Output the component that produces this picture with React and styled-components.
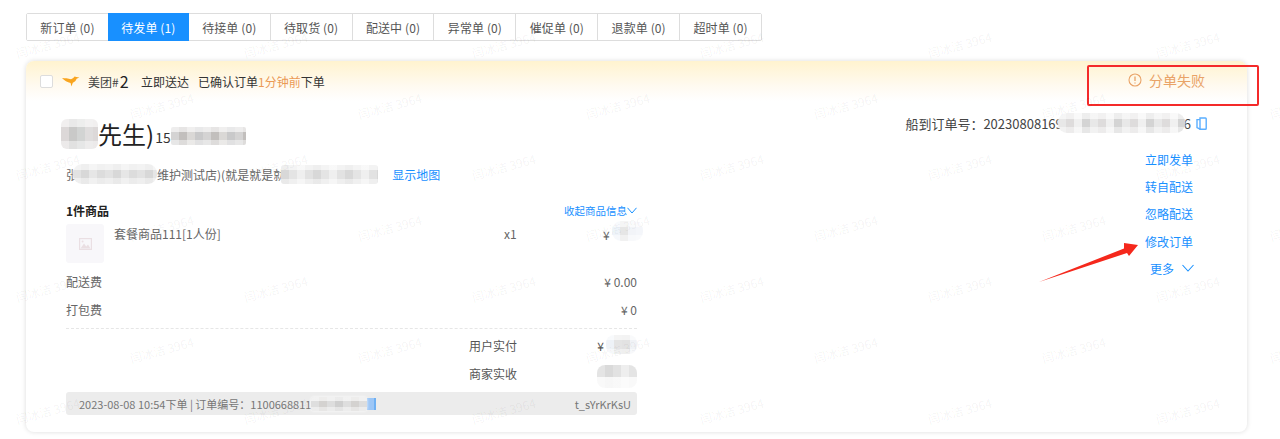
import React from "react";
import styled, { createGlobalStyle } from "styled-components";

const Global = createGlobalStyle`
  html, body { margin: 0; padding: 0; background: #fff; }
  body { font-family: "Noto Sans CJK SC", "Liberation Sans", sans-serif; font-size: 12px; color: #444; }
  #root { width: 1280px; height: 439px; overflow: hidden; position: relative; }
`;

const Page = styled.div`
  padding: 13px 33px 0 26px;
  box-sizing: border-box;
  height: 439px;
`;

const Tabs = styled.div`
  display: flex;
  width: 736px;
  height: 28px;
  box-sizing: border-box;
  border: 1px solid #ddd;
  border-radius: 2px;
`;

const Tab = styled.div`
  flex: 1;
  display: flex;
  align-items: center;
  justify-content: center;
  font-size: 12px;
  letter-spacing: 0.1px;
  color: ${(p) => (p.$active ? "#fff" : "#555")};
  background: ${(p) => (p.$active ? "#1890ff" : "#fff")};
  margin: ${(p) => (p.$active ? "-1px 0" : "0")};
  border-left: ${(p) => (p.$first || p.$active ? "none" : "1px solid #ddd")};
`;

const Card = styled.div`
  margin-top: 20px;
  width: 1221px;
  height: 371px;
  box-sizing: border-box;
  border-radius: 8px;
  background: #fff;
  box-shadow: 0 0 5px rgba(0, 0, 0, 0.14);
  overflow: hidden;
  position: relative;
`;

const Header = styled.div`
  height: 40px;
  padding-left: 14px;
  display: flex;
  align-items: center;
  background: linear-gradient(180deg, #fff3cf 0%, #fffaf0 62%, #fff 100%);
  color: #333;
`;

const Check = styled.span`
  width: 13px;
  height: 13px;
  border: 1px solid #ddd;
  border-radius: 2px;
  background: #fff;
  box-sizing: border-box;
  margin-right: 9px;
`;

const Bird = styled.svg`
  width: 18px;
  height: 11px;
  margin-right: 8px;
`;

const Platform = styled.span`
  display: inline-flex;
  align-items: center;
  width: 53px;
  color: #444;
`;

const Seq = styled.span`
  font-size: 16px;
  color: #222;
  margin-left: 1px;
`;

const Delivery = styled.span`
  width: 57px;
`;

const Orange = styled.span`
  color: #eb9a55;
`;

const Status = styled.div`
  margin-left: auto;
  width: 119px;
  display: flex;
  align-items: center;
  gap: 7px;
  color: #e9a367;
  font-size: 14px;
  line-height: 18px;
  margin-top: -2px;
`;

const Body = styled.div`
  display: flex;
  padding: 0 40px;
`;

const Left = styled.div`
  width: 571px;
`;

const NameRow = styled.div`
  margin-top: 18px;
  height: 30px;
  display: flex;
  align-items: center;
  margin-left: -5px;
  color: #222;
`;

const Name = styled.span`
  font-size: 24px;
  line-height: 30px;
`;

const Phone = styled.span`
  font-size: 14px;
  margin-left: 1px;
  margin-top: 6px;
  color: #333;
`;

const veils = {
  mid: `linear-gradient(180deg, rgba(255,255,255,.6) 0 28%, rgba(255,255,255,0) 28% 72%, rgba(255,255,255,.45) 72% 100%)`,
  low: `linear-gradient(180deg, rgba(255,255,255,0) 0 52%, rgba(255,255,255,.78) 52% 100%)`,
};

const Mosaic = styled.span`
  display: inline-block;
  flex: none;
  width: ${(p) => p.$w}px;
  height: ${(p) => p.$h}px;
  border-radius: ${(p) => p.$r ?? 6}px;
  margin: ${(p) => p.$m ?? 0};
  filter: blur(0.6px);
  box-shadow: 0 0 3px rgba(255, 255, 255, 0.9);
  background-image: ${(p) => veils[p.$veil ?? "mid"]},
    repeating-linear-gradient(
      90deg,
      ${(p) => p.$a ?? "#dcdcdc"} 0 8px,
      ${(p) => p.$b ?? "#c9cacb"} 8px 16px,
      ${(p) => p.$c ?? "#e5e4e4"} 16px 24px,
      ${(p) => p.$d ?? "#d2d2d2"} 24px 32px
    );
`;

const AddressRow = styled.div`
  margin-top: 15px;
  height: 20px;
  display: flex;
  align-items: center;
  color: #666;
`;

const MapLink = styled.span`
  color: #1890ff;
  margin-left: 14px;
`;

const TitleRow = styled.div`
  margin-top: 16px;
  height: 20px;
  display: flex;
  align-items: center;
  justify-content: space-between;
`;

const Title = styled.span`
  font-weight: 700;
  color: #222;
`;

const Collapse = styled.span`
  display: inline-flex;
  align-items: center;
  color: #1890ff;
  font-size: 10.5px;
`;

const ItemRow = styled.div`
  margin: 4px 0 5px;
  height: 39px;
  display: flex;
  color: #666;
`;

const Thumb = styled.div`
  flex: none;
  width: 38px;
  height: 39px;
  border-radius: 3px;
  background: #f8f7fa;
  display: flex;
  align-items: center;
  justify-content: center;
  margin-right: 10px;
`;

const ItemName = styled.span`
  flex: none;
  width: 390px;
  line-height: 20px;
`;

const Qty = styled.span`
  flex: none;
  width: 99px;
  line-height: 20px;
`;

const Price = styled.span`
  display: flex;
  flex: none;
  height: 20px;
  align-items: center;
`;

const FeeRow = styled.div`
  height: 28px;
  box-sizing: border-box;
  padding-bottom: 2px;
  display: flex;
  align-items: center;
  justify-content: space-between;
  color: #666;
`;

const Dashed = styled.div`
  margin-top: 4px;
  border-top: 1px dashed #e6e6e6;
  height: 3px;
`;

const PayRow = styled.div`
  height: 28px;
  box-sizing: border-box;
  padding: 0 0 2px 403px;
  display: flex;
  align-items: center;
  color: #555;
`;

const PayLabel = styled.span`
  width: 134px;
`;

const Footer = styled.div`
  margin-top: 4px;
  height: 23px;
  border-radius: 3px;
  background: #ececec;
  color: #777;
  display: flex;
  align-items: center;
  justify-content: space-between;
  padding: 0 6px 0 13px;
  font-size: 11px;
`;

const FooterLeft = styled.span`
  display: inline-flex;
  align-items: center;
`;

const SelectBit = styled.span`
  width: 9px;
  height: 12px;
  background: #9cc6f6;
  border-right: 2px solid #6fb0f2;
  box-sizing: border-box;
`;

const Right = styled.div`
  flex: 1;
  display: flex;
  flex-direction: column;
  align-items: flex-end;
`;

const OrderNo = styled.div`
  margin-top: 12px;
  height: 20px;
  display: flex;
  align-items: center;
  color: #444;
  font-size: 13px;
`;

const CopyIcon = styled.svg`
  width: 11px;
  height: 13px;
  margin-left: 5px;
`;

const Actions = styled.div`
  margin-top: 13px;
  padding-right: 14px;
  display: flex;
  flex-direction: column;
  align-items: flex-end;
  color: #1890ff;
  line-height: 27.2px;
`;

const More = styled.div`
  display: flex;
  align-items: center;
  gap: 8px;
  margin-right: -1px;
`;

const Annotation = styled.div`
  position: absolute;
  left: 1087px;
  top: 65px;
  width: 172px;
  height: 41px;
  box-sizing: border-box;
  border: 2px solid #f42a2a;
  border-radius: 2px;
`;

const ArrowSvg = styled.svg`
  position: absolute;
  left: 1036px;
  top: 238px;
  width: 106px;
  height: 48px;
`;

const Watermarks = styled.div`
  position: absolute;
  inset: 0;
  pointer-events: none;
  overflow: hidden;
`;

const Mark = styled.span`
  position: absolute;
  font-size: 12px;
  white-space: nowrap;
  color: rgba(0, 0, 0, 0.055);
  transform: rotate(-15deg);
  transform-origin: center;
`;

const tabs = [
  ["新订单", 0],
  ["待发单", 1],
  ["待接单", 0],
  ["待取货", 0],
  ["配送中", 0],
  ["异常单", 0],
  ["催促单", 0],
  ["退款单", 0],
  ["超时单", 0],
];

const marks = [];
for (let r = 0; r < 7; r++) {
  const y = 36 + r * 61;
  const offset = r % 2 === 0 ? 15 : 129;
  for (let c = 0; c < 6; c++) {
    marks.push({ x: offset + c * 228, y, key: `${r}-${c}` });
  }
}

export default function App() {
  return (
    <>
      <Global />
      <Page>
        <Tabs>
          {tabs.map(([label, n], i) => (
            <Tab key={label} $active={i === 1} $first={i === 0 || i === 2}>
              {label} ({n})
            </Tab>
          ))}
        </Tabs>
        <Card>
          <Header>
            <Check />
            <Bird viewBox="0 0 18 11">
              <path d="M0 2 C3 2.4 6 2.2 9 3.2 C10.4 2.8 11.4 2.2 12.6 0.6 L14.4 1 L17.4 1.6 L14.6 2.8 C14 4.6 12.6 6 10.8 6.8 L9.4 10.4 L8.6 7 C5.4 6.4 2.4 4.4 0 2 Z" fill="#f9a51f" />
            </Bird>
            <Platform>
              美团#<Seq>2</Seq>
            </Platform>
            <Delivery>立即送达</Delivery>
            <span>
              已确认订单<Orange>1分钟前</Orange>下单
            </span>
            <Status>
              <svg width="14" height="14" viewBox="0 0 14 14" fill="none" stroke="#e9a367" strokeWidth="1.1">
                <circle cx="7" cy="7" r="6" />
                <path d="M7 3.6 V8" strokeWidth="1.3" />
                <path d="M7 9.4 V10.6" strokeWidth="1.3" />
              </svg>
              分单失败
            </Status>
          </Header>
          <Body>
            <Left>
              <NameRow>
                <Mosaic $w={37} $h={30} $r={6} $a="#dcd8d8" $b="#c9c9c8" $c="#d2d4d3" $d="#dfdddd" />
                <Name>先生)</Name>
                <Phone>15</Phone>
                <Mosaic $w={75} $h={18} $r={2} $m="4px 0 0 0" $a="#d4d3d3" $b="#c2bfbd" $c="#dad8d6" $d="#c9c9ca" />
              </NameRow>
              <AddressRow>
                张
                <Mosaic $w={84} $h={20} $r={9} $m="0 0 0 -5px" $a="#e2e2e2" $b="#d8d8d8" $c="#e6e6e6" $d="#dcdcdc" />
                维护测试店)(就是就是就
                <Mosaic $w={97} $h={19} $r={3} $m="0 0 0 -4px" $a="#d8d8d8" $b="#e4e4e4" $c="#efefef" $d="#e2e2e2" />
                <MapLink>显示地图</MapLink>
              </AddressRow>
              <TitleRow>
                <Title>1件商品</Title>
                <Collapse>
                  收起商品信息
                  <svg width="10" height="7" viewBox="0 0 10 7" fill="none" stroke="#1890ff" strokeWidth="1">
                    <path d="M0.5 0.8 L5 6 L9.5 0.8" />
                  </svg>
                </Collapse>
              </TitleRow>
              <ItemRow>
                <Thumb>
                  <svg width="13" height="12" viewBox="0 0 13 12" fill="none">
                    <rect x="0.6" y="0.6" width="11.8" height="10.8" stroke="#eadfe3" strokeWidth="1.2" />
                    <path d="M1.5 10.6 L5 5.5 L7.2 8.4 L9 6.6 L11.5 10.6 Z" fill="#eadfe3" />
                    <circle cx="3.6" cy="3.4" r="1" fill="#eadfe3" />
                  </svg>
                </Thumb>
                <ItemName>套餐商品111[1人份]</ItemName>
                <Qty>x1</Qty>
                <Price>
                  ¥
                  <Mosaic $w={31} $h={20} $r={9} $m="-6px 0 0 2px" $a="#eef3f9" $b="#e6e6e6" $c="#f2f4f8" $d="#f4f6fa" />
                </Price>
              </ItemRow>
              <FeeRow>
                <span>配送费</span>
                <span>¥ 0.00</span>
              </FeeRow>
              <FeeRow>
                <span>打包费</span>
                <span>¥ 0</span>
              </FeeRow>
              <Dashed />
              <PayRow>
                <PayLabel>用户实付</PayLabel>
                ¥
                <Mosaic $w={31} $h={19} $r={8} $m="-1px 0 0 2px" $a="#eef2f7" $b="#e4e4e4" $c="#e2e2e2" $d="#f0f2f6" />
              </PayRow>
              <PayRow>
                <PayLabel>商家实收</PayLabel>
                <Mosaic $w={40} $h={23} $r={8} $m="7px 0 0 0" $veil="low" $a="#e4e4e4" $b="#dadada" $c="#e2e2e2" $d="#eeeeee" />
              </PayRow>
              <Footer>
                <FooterLeft>
                  2023-08-08 10:54下单 | 订单编号：1100668811
                  <Mosaic $w={56} $h={14} $r={3} $a="#dedede" $b="#d4d2d0" $c="#dddddd" $d="#cfcfcf" />
                  <SelectBit />
                </FooterLeft>
                <span>t_sYrKrKsU</span>
              </Footer>
            </Left>
            <Right>
              <OrderNo>
                船到订单号：20230808169
                <Mosaic $w={127} $h={20} $r={9} $m="0 -1px 0 -5px" $a="#e8e8e8" $b="#dedcdc" $c="#f0f0f0" $d="#d4d4d4" />
                6
                <CopyIcon viewBox="0 0 11 13" fill="none" stroke="#5aaeff" strokeWidth="1.4">
                  <path d="M4 1 H9.4 C9.8 1 10.2 1.3 10.2 1.8 V11.4 C10.2 11.8 9.8 12.2 9.4 12.2 H4 Z" />
                  <path d="M4 2.6 H1 V10.6 L4 12.2" />
                </CopyIcon>
              </OrderNo>
              <Actions>
                <span>立即发单</span>
                <span>转自配送</span>
                <span>忽略配送</span>
                <span>修改订单</span>
                <More>
                  更多
                  <svg width="12" height="8" viewBox="0 0 12 8" fill="none" stroke="#1890ff" strokeWidth="1.1">
                    <path d="M0.5 1 L6 7 L11.5 1" />
                  </svg>
                </More>
              </Actions>
            </Right>
          </Body>
        </Card>
      </Page>
      <Annotation />
      <ArrowSvg viewBox="0 0 106 48">
        <path d="M3 44 L88 10.5 L88 5 L102 7 L93 18 L91 15 Z" fill="#f5281c" />
      </ArrowSvg>
      <Watermarks>
        {marks.map((m) => (
          <Mark key={m.key} style={{ left: m.x, top: m.y }}>
            闫冰洁 3964
          </Mark>
        ))}
      </Watermarks>
    </>
  );
}
